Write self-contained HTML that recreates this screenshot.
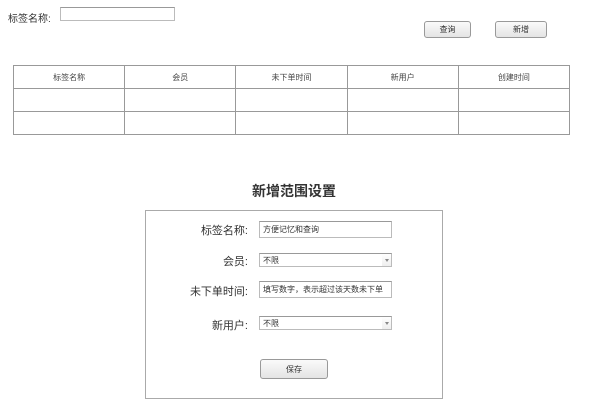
<!DOCTYPE html>
<html><head><meta charset="utf-8"><style>
*{margin:0;padding:0;box-sizing:border-box}
body{width:600px;height:411px;background:#fff;position:relative;font-family:"Liberation Sans","Noto Sans CJK SC",sans-serif;color:#333;overflow:hidden}
.a{position:absolute}
.inp{position:absolute;border:1px solid #bbb;border-top-color:#999;background:#fff;font-size:8px;padding-left:3px;display:flex;align-items:center}
.btn{position:absolute;border:1px solid #999;border-radius:3px;background:linear-gradient(#fafafa,#e4e4e4);font-size:8px;display:flex;align-items:center;justify-content:center}
table{position:absolute;left:13px;top:65px;width:557px;border-collapse:collapse;table-layout:fixed}
td{border:1px solid #999;height:23px;font-size:8px;text-align:center;color:#444;width:20%}
.lbl{position:absolute;right:352px;font-size:11px;color:#333;text-align:right}
.sel::before{content:"";position:absolute;right:0;top:0;width:9px;height:100%;background:linear-gradient(#fff,#eee)}
.sel::after{content:"";position:absolute;right:2px;top:5px;width:0;height:0;border:2.5px solid transparent;border-top:3px solid #888}
</style></head><body>
<div class="a" style="left:8px;top:10px;font-size:10px">标签名称:</div>
<div class="inp" style="left:60px;top:7px;width:115px;height:14px"></div>
<div class="btn" style="left:424px;top:21px;width:47px;height:17px">查询</div>
<div class="btn" style="left:495px;top:21px;width:52px;height:17px">新增</div>
<table><tr><td>标签名称</td><td>会员</td><td>未下单时间</td><td>新用户</td><td>创建时间</td></tr>
<tr><td></td><td></td><td></td><td></td><td></td></tr>
<tr><td></td><td></td><td></td><td></td><td></td></tr></table>
<div class="a" style="left:145px;width:298px;top:181px;text-align:center;font-size:14px;font-weight:bold;color:#333">新增范围设置</div>
<div class="a" style="left:145px;top:210px;width:298px;height:189px;border:1px solid #aaa"></div>
<div class="lbl" style="top:222px">标签名称:</div>
<div class="inp" style="left:259px;top:221px;width:133px;height:17px">方便记忆和查询</div>
<div class="lbl" style="top:253px">会员:</div>
<div class="inp sel" style="left:259px;top:253px;width:133px;height:14px">不限</div>
<div class="lbl" style="top:283px">未下单时间:</div>
<div class="inp" style="left:259px;top:281px;width:133px;height:17px">填写数字，表示超过该天数未下单</div>
<div class="lbl" style="top:317px">新用户:</div>
<div class="inp sel" style="left:259px;top:316px;width:133px;height:14px">不限</div>
<div class="btn" style="left:260px;top:359px;width:68px;height:20px">保存</div>
</body></html>
